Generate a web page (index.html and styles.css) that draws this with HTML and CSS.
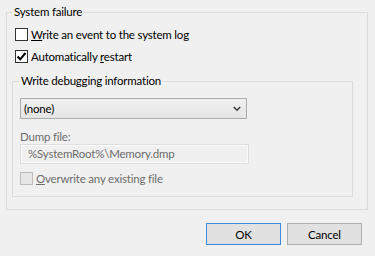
FILE: index.html
```html
<!DOCTYPE html>
<html>
<head>
<meta charset="utf-8">
<link rel="stylesheet" href="styles.css">
</head>
<body>
<div class="dialog">
  <fieldset class="group outer">
    <legend>System failure</legend>
    <label class="check"><span class="box"></span><span class="lbl"><u>W</u>rite an event to the system log</span></label>
    <label class="check"><span class="box"><svg class="tick" width="11" height="11" viewBox="0 0 11 11"><path d="M1.5 5.5 L4.2 8.3 L9.5 2" fill="none" stroke="#000" stroke-width="2"/></svg></span><span class="lbl">Automatically <u>r</u>estart</span></label>
    <fieldset class="group inner">
      <legend>Write debugging information</legend>
      <div class="select"><span>(none)</span><svg class="chev" width="8" height="6" viewBox="0 0 8 6"><path d="M0.8 1 L4 4.2 L7.2 1" fill="none" stroke="#3c3c3c" stroke-width="1.6"/></svg></div>
      <div class="dump-label">Dump file:</div>
      <div class="textbox">%SystemRoot%\Memory.dmp</div>
      <label class="check disabled"><span class="box"></span><span class="lbl"><u>O</u>verwrite any existing file</span></label>
    </fieldset>
  </fieldset>
  <div class="buttons">
    <button class="btn default">OK</button>
    <button class="btn">Cancel</button>
  </div>
</div>
</body>
</html>
```

FILE: styles.css
```css
html, body {
  margin: 0;
  padding: 0;
}
body {
  width: 375px;
  height: 256px;
  overflow: hidden;
  background: #f0f0f0;
  font-family: Lato, "Noto Sans", sans-serif;
  font-size: 11.5px;
  letter-spacing: -0.2px;
  color: #000;
}
.dialog {
  padding: 4px 7px 0 6px;
}
.group {
  margin: 0;
  border: 1px solid #dcdcdc;
  min-width: 0;
}
.group legend {
  padding: 0 2px;
  line-height: 16px;
  height: 16px;
}
.outer {
  padding: 3px 14px 12px 5px;
}
.check {
  display: flex;
  align-items: center;
  height: 22px;
  padding-left: 3px;
}
.box {
  width: 11px;
  height: 11px;
  border: 1px solid #333;
  background: #fff;
  margin-right: 3px;
  display: flex;
  align-items: center;
  justify-content: center;
  flex: none;
}
.tick {
  display: block;
}
.inner {
  margin-top: 6px;
  padding: 9px 0 7px 7px;
}
.inner legend {
  margin-left: -1px;
}
.inner .check {
  padding-left: 0;
  margin-top: 3px;
}
.select {
  height: 19px;
  border: 1px solid #acacac;
  background: linear-gradient(#f0f0f0, #e5e5e5);
  display: flex;
  align-items: center;
  justify-content: space-between;
  padding: 0 0 0 3px;
  box-sizing: content-box;
  width: 222px;
}
.chev {
  margin-right: 5px;
  display: block;
}
.dump-label {
  margin-top: 10px;
  line-height: 15px;
  height: 15px;
  color: #6d6d6d;
}
.textbox {
  width: 220px;
  height: 18px;
  line-height: 18px;
  padding-left: 7px;
  border: 1px solid #dedede;
  box-shadow: inset 0 0 0 1px #fafafa;
  color: #6d6d6d;
}
.disabled .box {
  border-color: #bcbcbc;
  background: #e6e6e6;
}
.disabled .lbl {
  color: #6d6d6d;
}
.buttons {
  display: flex;
  justify-content: flex-end;
  gap: 6px;
  margin-top: 13px;
  padding-right: 6px;
}
.btn {
  width: 75px;
  height: 22px;
  margin: 0;
  padding: 0;
  border: 1px solid #adadad;
  background: #e1e1e1;
  font: inherit;
  letter-spacing: inherit;
  color: #000;
}
.btn.default {
  border-color: #3c8ad8;
}
```
